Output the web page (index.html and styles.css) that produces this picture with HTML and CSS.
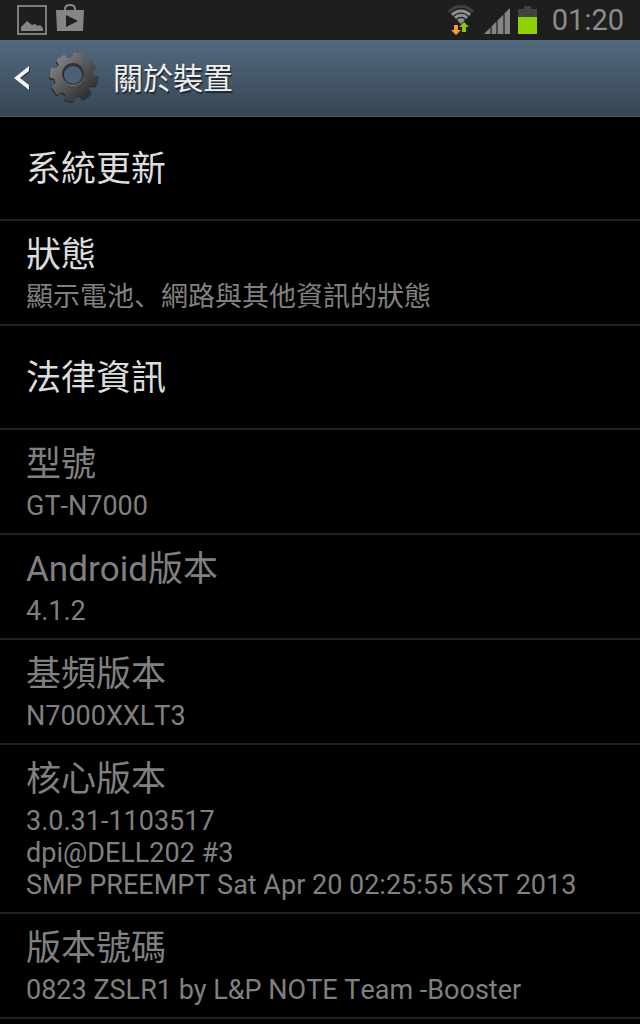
FILE: index.html
```html
<!DOCTYPE html>
<html lang="zh-TW">
<head>
    <meta charset="UTF-8">
    <meta name="viewport" content="width=device-width, initial-scale=1.0">
    <title>關於裝置</title>
    <link rel="stylesheet" href="styles.css">
</head>
<body>
    <div class="status-bar">
        <div class="notifications">
            <svg width="30" height="30" viewBox="0 0 30 30">
                <rect x="1" y="1" width="28" height="28" fill="none" stroke="#7c7c7c" stroke-width="2"/>
                <path d="M4 26v-4l6-6 5 4 3-1 3 2 2-1 3 3v3z" fill="#858585"/>
            </svg>
            <svg width="28" height="30" viewBox="0 0 28 30">
                <path d="M9 7V4q0-4 5-4t5 4v3" fill="none" stroke="#858585" stroke-width="2"/>
                <path d="M0 5h28l-1 21H1z" fill="#858585"/>
                <path d="M10 10v12l12-6z" fill="#1e1e1e"/>
            </svg>
        </div>
        <div class="indicators">
            <svg width="28" height="32" viewBox="0 0 28 32">
                <g fill="none" stroke-width="3">
                    <path d="M1 8A16 16 0 0 1 25 8" stroke="#404040"/>
                    <path d="M4 11A12 12 0 0 1 22 11M7 14A8 8 0 0 1 19 14" stroke="#909090"/>
                </g>
                <path d="M9 16q4-4 8 0l-4 4z" fill="#909090"/>
                <path d="M6 21h4v5h3l-5 5-5-5h3z" fill="#f79a38"/>
                <path d="M14 28h4v-5h3l-5-5-5 5h3z" fill="#89c90a"/>
            </svg>
            <svg width="26" height="28" viewBox="0 0 26 28">
                <path d="M0 28L26 2v26z" fill="#858585"/>
                <path d="M7 21v7M13 15v13M20 8v20" stroke="#080808" stroke-width="1"/>
            </svg>
            <svg width="19" height="30" viewBox="0 0 19 30">
                <path d="M0 4h6V1h7v3h6v8H0z" fill="#414141"/>
                <path d="M0 12h19v17H0z" fill="#90d200"/>
            </svg>
            <time class="clock">01:20</time>
        </div>
    </div>

    <header class="action-bar">
        <a class="back" href="#" aria-label="返回">
            <svg width="16" height="26" viewBox="0 0 16 26">
                <path d="M1 14L16 2v5L7 14l9 7v5z" fill="#26333f"/>
                <path d="M0 13L15 1v5L6 13l9 7v5z" fill="#f4f4f4"/>
            </svg>
            <svg width="50" height="52" viewBox="-25 -25 50 52">
                <defs>
                    <linearGradient id="metal" x1="0" y1="0" x2="1" y2="1">
                        <stop offset="0.100" stop-color="#858585"/>
                        <stop offset="0.500" stop-color="#555"/>
                        <stop offset="0.900" stop-color="#2c2c2c"/>
                    </linearGradient>
                    <path id="gear" d="M18-.9L23 .4 21.700 7.500 16.600 7Q15 10 13.400 12L16 16.600 10 20.600 6.700 16.700Q4 18 .9 18L-.4 23-7.500 21.700-7 16.600Q-10 15-12 13.400L-16.600 16-20.600 10-16.700 6.700Q-18 4-18 .9L-23-.4-21.700-7.500-16.600-7Q-15-10-13.400-12L-16-16.600-10-20.600-6.700-16.700Q-4-18-.9-18L.4-23 7.500-21.700 7-16.600Q10-15 12-13.400L16.600-16 20.600-10 16.700-6.700Q18-4 18-.9z"/>
                </defs>
                <use href="#gear" x="-1" y="2" fill="#2a2c2e" stroke="#2a2c2e" stroke-width="2" stroke-linejoin="round"/>
                <use href="#gear" fill="url(#metal)" stroke="url(#metal)" stroke-width="3" stroke-linejoin="round"/>
                <circle cx="-1" cy="-2" r="11" fill="#77797b"/>
                <circle cx="-1" cy="-3" r="11" fill="#303234"/>
                <circle cx="-1" cy="-2" r="9" fill="#4b6074"/>
            </svg>
        </a>
        <h1>關於裝置</h1>
    </header>

    <ul class="settings">
        <li><a class="row" href="#"><span class="title">系統更新</span></a></li>
        <li>
            <a class="row" href="#">
                <span class="title">狀態</span>
                <span class="summary">顯示電池、網路與其他資訊的狀態</span>
            </a>
        </li>
        <li><a class="row" href="#"><span class="title">法律資訊</span></a></li>
        <li class="row disabled">
            <span class="title">型號</span>
            <span class="summary">GT-N7000</span>
        </li>
        <li class="row disabled">
            <span class="title">Android版本</span>
            <span class="summary">4.1.2</span>
        </li>
        <li class="row disabled">
            <span class="title">基頻版本</span>
            <span class="summary">N7000XXLT3</span>
        </li>
        <li class="row disabled">
            <span class="title">核心版本</span>
            <span class="summary">3.0.31-1103517<br>dpi@DELL202 #3<br>SMP PREEMPT Sat Apr 20 02:25:55 KST 2013</span>
        </li>
        <li class="row disabled">
            <span class="title">版本號碼</span>
            <span class="summary">0823 ZSLR1 by L&amp;P NOTE Team -Booster</span>
        </li>
    </ul>
</body>
</html>
```
FILE: styles.css
```css
* {
    box-sizing: border-box;
}
body {
    margin: 0;
    background: #000;
    color: #dcdcdc;
    font-family: Roboto, "Noto Sans CJK SC", sans-serif;
    font-feature-settings: "locl" 0;
    font-kerning: none;
}
svg {
    display: block;
    flex: none;
    overflow: visible;
}
.status-bar {
    display: flex;
    justify-content: space-between;
    align-items: center;
    height: 40px;
    padding: 0 16px 0 17px;
    background: #1e1e1e;
}
.notifications {
    display: flex;
    gap: 9px;
}
.indicators {
    display: flex;
    align-items: center;
    gap: 8px;
}
.clock {
    margin-left: 7px;
    color: #8c8c8c;
    font-size: 29px;
    line-height: 40px;
}
.action-bar {
    display: flex;
    align-items: center;
    gap: 14px;
    height: 77px;
    padding-left: 14px;
    background: linear-gradient(#52697f, #364654);
    border-bottom: 1px solid #465662;
}
.back {
    display: flex;
    align-items: center;
    gap: 19px;
}
h1 {
    margin: 0;
    padding-top: 2px;
    color: #f0f0f0;
    font-size: 30px;
    font-weight: 400;
    line-height: 40px;
    text-shadow: 1px 2px 1px #1c262e;
}
.settings {
    margin: 0;
    padding: 0;
    list-style: none;
}
.row {
    display: flex;
    flex-direction: column;
    justify-content: center;
    gap: 4px;
    min-height: 104px;
    padding: 14px 26px 11px;
    border-bottom: 2px solid #202020;
    color: #dcdcdc;
    text-decoration: none;
}
.title {
    font-size: 35px;
    line-height: 42px;
}
.summary {
    color: #808080;
    font-size: 27px;
    line-height: 32px;
}
.disabled {
    color: #808080;
}
```
